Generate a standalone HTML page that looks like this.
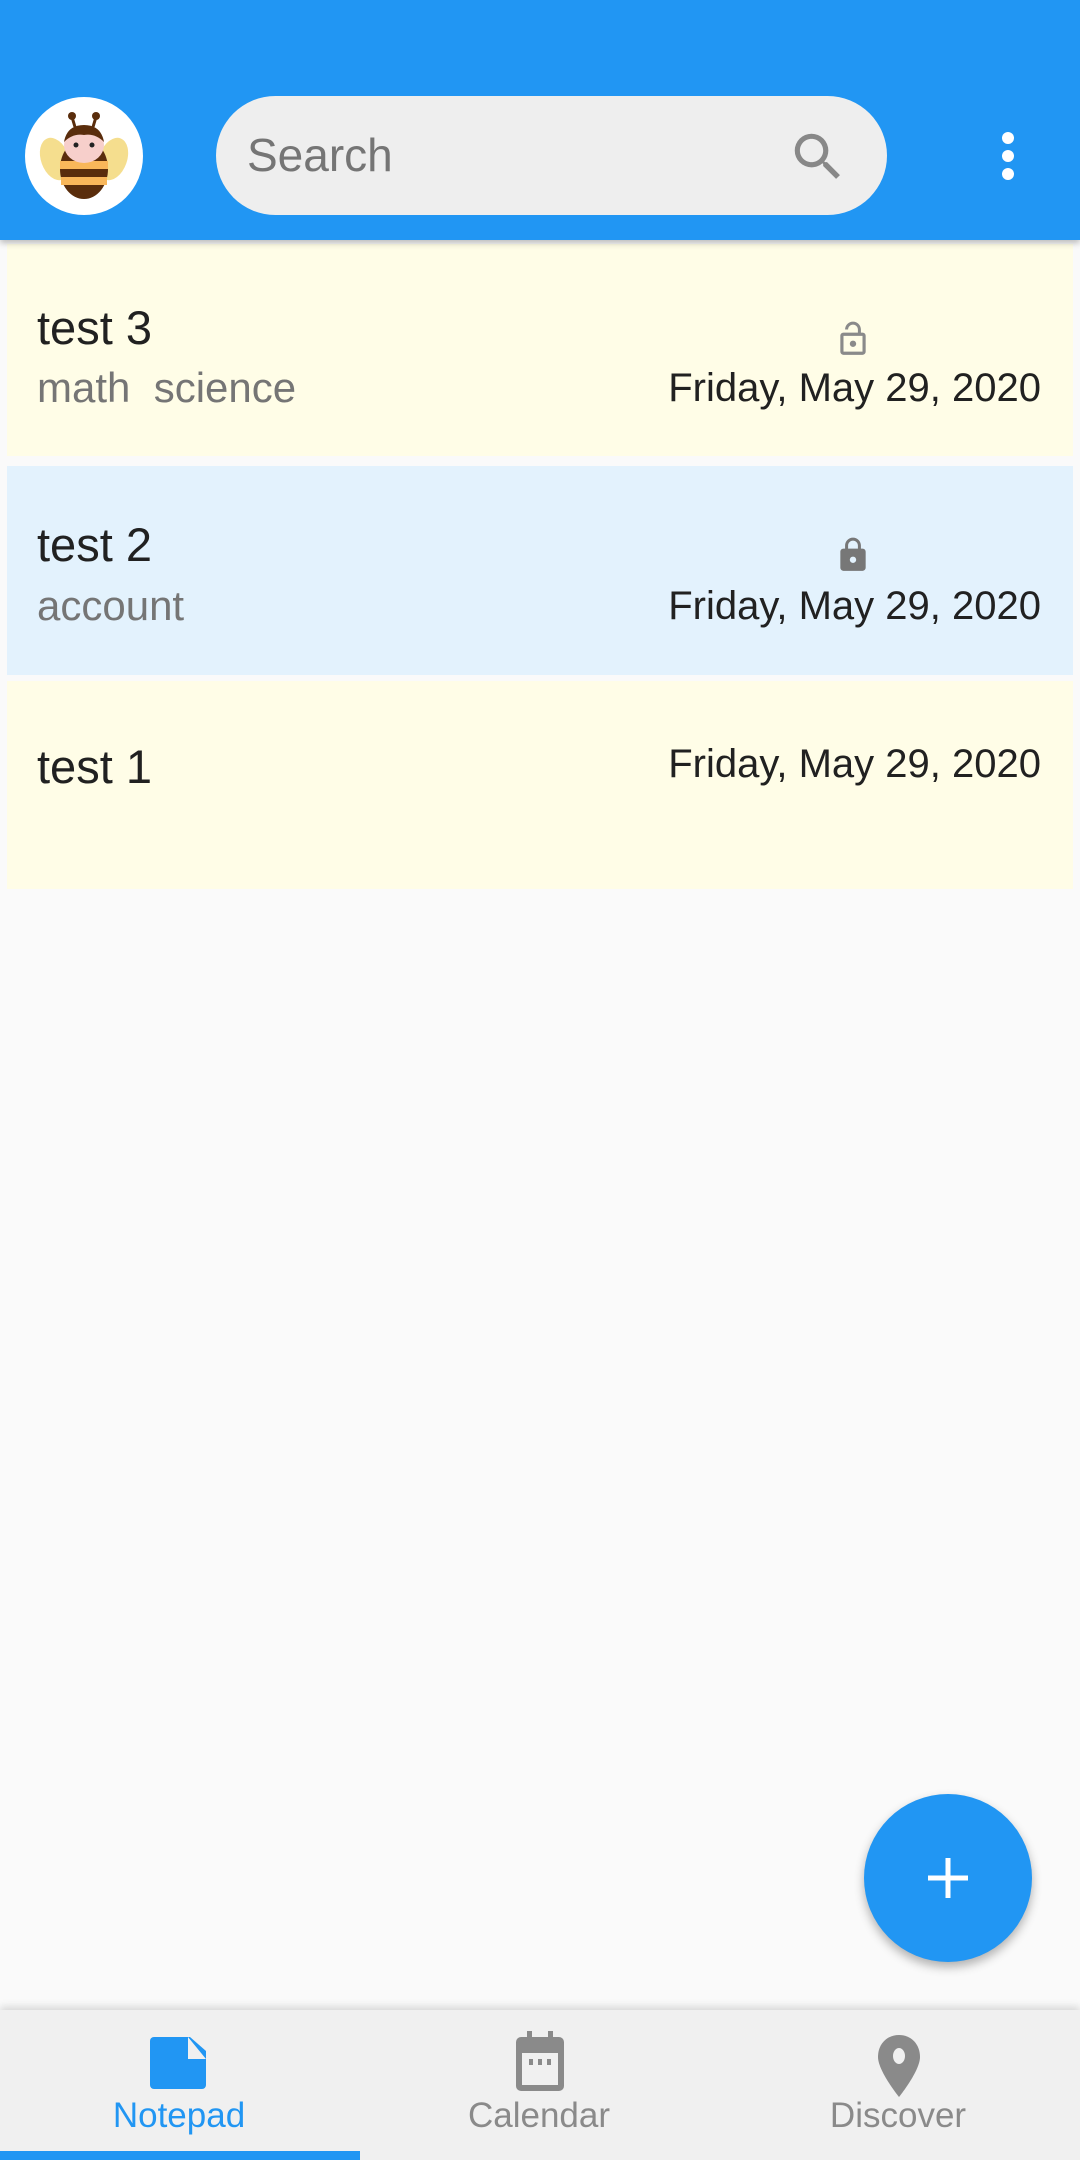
<!DOCTYPE html>
<html><head><meta charset="utf-8"><style>
*{margin:0;padding:0;box-sizing:border-box}
body{width:1080px;height:2160px;background:#FAFAFA;font-family:"Liberation Sans",sans-serif;position:relative;overflow:hidden}
.hdr{position:absolute;left:0;top:0;width:1080px;height:240px;background:#2196F3;box-shadow:0 3px 6px rgba(0,0,0,.25);z-index:2}
.av{position:absolute;left:25px;top:97px;width:118px;height:118px;border-radius:50%;background:#fff;overflow:hidden}
.sb{position:absolute;left:216px;top:96px;width:671px;height:119px;border-radius:60px;background:#EEEEEE}
.sb span{position:absolute;left:31px;top:32px;font-size:46px;color:#757575}
.card{position:absolute;left:7px;width:1066px}
.t{position:absolute;left:30px;font-size:47px;color:#212121}
.s{position:absolute;left:30px;font-size:42px;color:#757575}
.d{position:absolute;right:32px;font-size:40px;color:#212121}
.nav{position:absolute;left:0;top:2010px;width:1080px;height:150px;background:#F0F0F0;box-shadow:0 -3px 8px rgba(0,0,0,.15)}
.lbl{position:absolute;top:86px;font-size:35px;color:#8A8A8A;transform:translateX(-50%)}
</style></head><body>
<div class="hdr">
 <div class="av"><svg width="118" height="118" viewBox="0 0 118 118">
  <ellipse cx="30" cy="62" rx="14" ry="22" fill="#F5DE8E" transform="rotate(-20 30 62)"/>
  <ellipse cx="88" cy="62" rx="14" ry="22" fill="#F5DE8E" transform="rotate(20 88 62)"/>
  <line x1="50" y1="30" x2="47" y2="20" stroke="#5a2d0c" stroke-width="3"/><circle cx="47" cy="19" r="4" fill="#5a2d0c"/>
  <line x1="68" y1="30" x2="71" y2="20" stroke="#5a2d0c" stroke-width="3"/><circle cx="71" cy="19" r="4" fill="#5a2d0c"/>
  <ellipse cx="59" cy="72" rx="24" ry="30" fill="#5a2d0c"/>
  <rect x="35" y="64" width="48" height="8" fill="#F9B75A"/><rect x="36" y="80" width="46" height="8" fill="#F9B75A"/>
  <ellipse cx="59" cy="48" rx="20" ry="18" fill="#F7CFCB"/>
  <path d="M39 45 Q42 28 59 28 Q76 28 79 45 Q70 36 59 38 Q48 36 39 45Z" fill="#5a2d0c"/>
  <circle cx="51" cy="48" r="2.5" fill="#222"/><circle cx="67" cy="48" r="2.5" fill="#222"/>
 </svg></div>
 <div class="sb"><span>Search</span>
  <svg style="position:absolute;left:571px;top:30px" width="62" height="62" viewBox="0 0 24 24"><path fill="#888" d="M15.5 14h-.79l-.28-.27A6.47 6.47 0 0 0 16 9.5 6.5 6.5 0 1 0 9.5 16c1.61 0 3.09-.59 4.23-1.57l.27.28v.79l5 4.99L20.49 19l-4.99-5zm-6 0C7.01 14 5 11.99 5 9.5S7.01 5 9.5 5 14 7.01 14 9.5 11.99 14 9.5 14z"/></svg>
 </div>
 <svg style="position:absolute;left:996px;top:130px" width="24" height="52" viewBox="0 0 24 52"><circle cx="12" cy="8" r="6" fill="#fff"/><circle cx="12" cy="26" r="6" fill="#fff"/><circle cx="12" cy="44" r="6" fill="#fff"/></svg>
</div>

<div class="card" style="top:244px;height:212px;background:#FFFDE7">
 <div class="t" style="top:56px">test 3</div>
 <div class="s" style="top:120px">math&nbsp; science</div>
 <svg style="position:absolute;left:827px;top:76px" width="38" height="38" viewBox="0 0 24 24"><path fill="#8a8a8a" d="M12 17c1.1 0 2-.9 2-2s-.9-2-2-2-2 .9-2 2 .9 2 2 2zm6-9h-1V6c0-2.76-2.24-5-5-5S7 3.24 7 6h1.9c0-1.71 1.39-3.1 3.1-3.1 1.71 0 3.1 1.39 3.1 3.1v2H6c-1.1 0-2 .9-2 2v10c0 1.1.9 2 2 2h12c1.1 0 2-.9 2-2V10c0-1.1-.9-2-2-2zm0 12H6V10h12v10z"/></svg>
 <div class="d" style="top:122px">Friday, May 29, 2020</div>
</div>
<div class="card" style="top:466px;height:209px;background:#E3F2FD">
 <div class="t" style="top:51px">test 2</div>
 <div class="s" style="top:116px">account</div>
 <svg style="position:absolute;left:827px;top:70px" width="38" height="38" viewBox="0 0 24 24"><path fill="#777" d="M18 8h-1V6c0-2.76-2.24-5-5-5S7 3.24 7 6v2H6c-1.1 0-2 .9-2 2v10c0 1.1.9 2 2 2h12c1.1 0 2-.9 2-2V10c0-1.1-.9-2-2-2zm-6 9c-1.1 0-2-.9-2-2s.9-2 2-2 2 .9 2 2-.9 2-2 2zm3.1-9H8.9V6c0-1.71 1.39-3.1 3.1-3.1 1.71 0 3.1 1.39 3.1 3.1v2z"/></svg>
 <div class="d" style="top:118px">Friday, May 29, 2020</div>
</div>
<div class="card" style="top:681px;height:208px;background:#FFFDE7">
 <div class="t" style="top:58px">test 1</div>
 <div class="d" style="top:61px">Friday, May 29, 2020</div>
</div>

<div style="position:absolute;left:864px;top:1794px;width:168px;height:168px;border-radius:50%;background:#2196F3;box-shadow:0 5px 10px rgba(0,0,0,.3)">
 <svg style="position:absolute;left:60px;top:60px" width="48" height="48" viewBox="0 0 48 48"><path d="M24 4v40M4 24h40" stroke="#fff" stroke-width="5"/></svg>
</div>

<div class="nav">
 <svg style="position:absolute;left:150px;top:27px" width="60" height="52" viewBox="0 0 60 52"><path fill="#2196F3" d="M0 4a4 4 0 0 1 4-4h36l16 14v34a4 4 0 0 1-4 4H4a4 4 0 0 1-4-4z"/><path fill="#F0F0F0" d="M38 0v22h18z"/></svg>
 <svg style="position:absolute;left:512px;top:21px" width="56" height="62" viewBox="0 0 56 62"><rect x="4" y="6" width="48" height="54" rx="5" fill="#8a8a8a"/><rect x="10" y="22" width="36" height="32" fill="#F0F0F0"/><rect x="15" y="0" width="5" height="10" fill="#8a8a8a"/><rect x="36" y="0" width="5" height="10" fill="#8a8a8a"/><rect x="17" y="28" width="4" height="6" fill="#8a8a8a"/><rect x="26" y="28" width="4" height="6" fill="#8a8a8a"/><rect x="35" y="28" width="4" height="6" fill="#8a8a8a"/></svg>
 <svg style="position:absolute;left:878px;top:25px" width="42" height="62" viewBox="0 0 42 62"><path fill="#8a8a8a" d="M21 0C9 0 0 9 0 22c0 14 21 40 21 40s21-26 21-40C42 9 33 0 21 0z"/><ellipse cx="21" cy="21" rx="6" ry="8" fill="#F0F0F0"/></svg>
 <div class="lbl" style="left:179px;color:#2196F3">Notepad</div>
 <div class="lbl" style="left:539px">Calendar</div>
 <div class="lbl" style="left:898px">Discover</div>
 <div style="position:absolute;left:0;top:141px;width:360px;height:9px;background:#2196F3"></div>
</div>
</body></html>
